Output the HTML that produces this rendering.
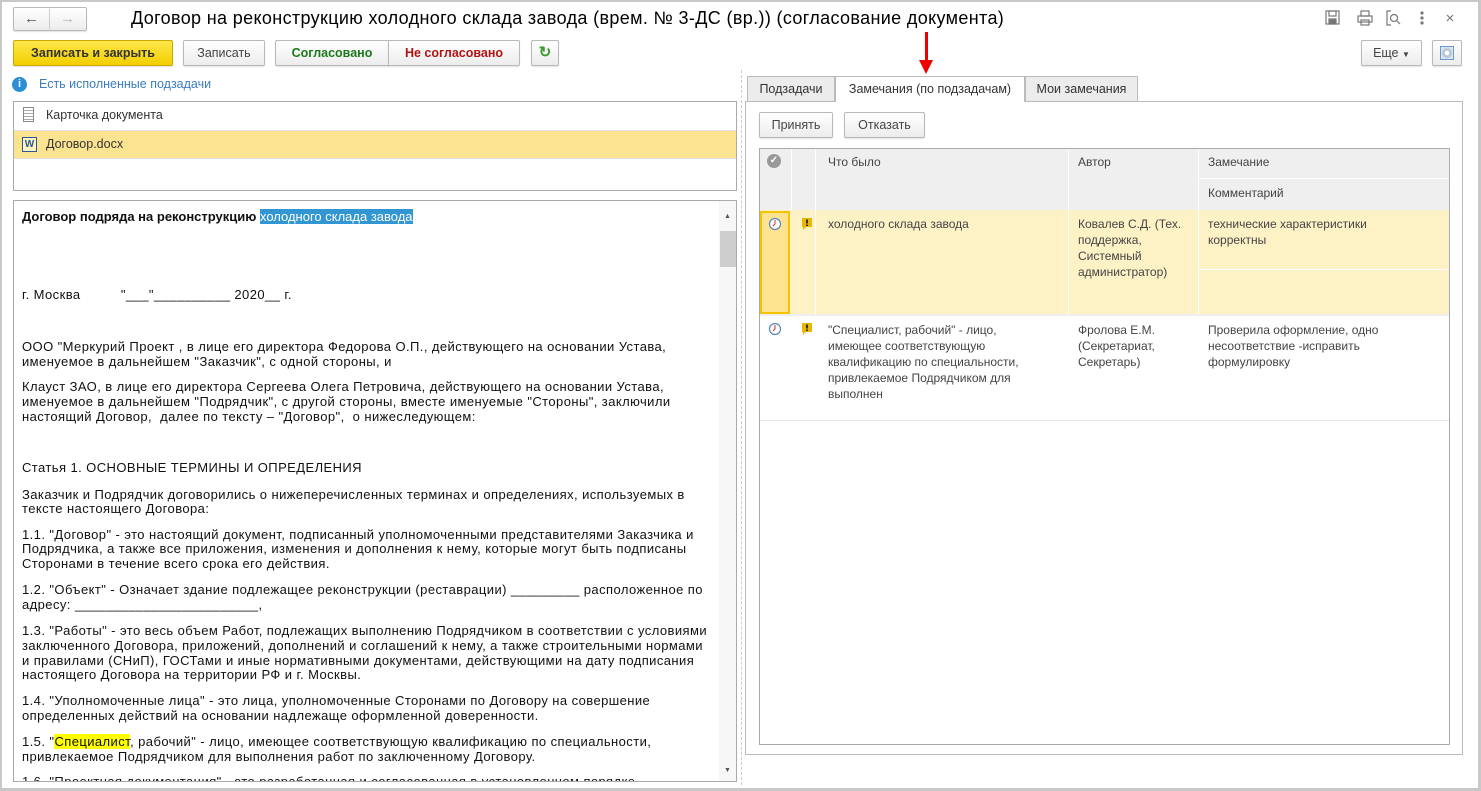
<!DOCTYPE html>
<html><head><meta charset="utf-8"><style>
*{box-sizing:border-box;margin:0;padding:0}
body{width:1481px;height:791px;background:#c8c8c8;position:relative;overflow:hidden;font-family:"Liberation Sans",Arial,sans-serif;font-size:12px;color:#333}
.a{position:absolute}
.win{left:2px;top:2px;width:1476px;height:786px;background:#fff}
.btn{position:absolute;height:26px;border:1px solid #b9b9b9;border-radius:2px;background:linear-gradient(#fff,#ececec);box-shadow:0 1px 1px rgba(0,0,0,.12);text-align:center;line-height:24px;font-size:12.5px;color:#444}
.doc{font-size:13px;color:#111;white-space:nowrap;line-height:15px;letter-spacing:0.42px}
.doc div{position:absolute;left:22px}
.g{position:absolute;font-size:12px;color:#444;line-height:16px}
</style></head><body>
<div class="a win"></div>
<!-- nav -->
<div class="btn" style="left:13px;top:7px;width:74px;height:24px"></div>
<div class="a" style="left:49px;top:9px;width:1px;height:20px;background:#ccc"></div>
<div class="a" style="left:24px;top:10px;font-size:15px;color:#555;font-weight:bold">&#8592;</div>
<div class="a" style="left:60px;top:10px;font-size:15px;color:#bbb;font-weight:bold">&#8594;</div>
<div class="a" style="left:131px;top:8px;font-size:18px;letter-spacing:0.35px;color:#000;white-space:nowrap">Договор на реконструкцию холодного склада завода (врем. № 3-ДС (вр.)) (согласование документа)</div>
<!-- top right icons -->
<svg class="a" style="left:1325px;top:10px" width="140" height="16" viewBox="0 0 140 16" fill="none" stroke="#777" stroke-width="1.2">
<rect x="1" y="1" width="13" height="13"/><rect x="4" y="1" width="7" height="5"/><rect x="4" y="9" width="7" height="5" fill="#777"/>
<rect x="33" y="6" width="14" height="6"/><rect x="36" y="1" width="8" height="5"/><rect x="36" y="10" width="8" height="5"/>
<path d="M66 1h-4v14h4M62 1"/><circle cx="69" cy="8" r="3.5"/><path d="M72 11l3 3"/>
<circle cx="97" cy="3" r="1" fill="#777"/><circle cx="97" cy="8" r="1" fill="#777"/><circle cx="97" cy="13" r="1" fill="#777"/>
<path d="M122 5l6 6M128 5l-6 6"/></svg>
<!-- toolbar -->
<div class="btn" style="left:13px;top:40px;width:160px;background:linear-gradient(#fde74a,#f3cf00);border-color:#c9a800;color:#333;font-weight:bold">Записать и закрыть</div>
<div class="btn" style="left:183px;top:40px;width:82px">Записать</div>
<div class="btn" style="left:275px;top:40px;width:114px;color:#1a7a1a;font-weight:bold;border-radius:2px 0 0 2px">Согласовано</div>
<div class="btn" style="left:388px;top:40px;width:132px;color:#b01515;font-weight:bold;border-radius:0 2px 2px 0">Не согласовано</div>
<div class="btn" style="left:531px;top:40px;width:28px;color:#3a9a2a;font-weight:bold;font-size:15px">&#8635;</div>
<div class="btn" style="left:1361px;top:40px;width:61px">Еще <span style="font-size:8px">&#9660;</span></div>
<div class="btn" style="left:1432px;top:40px;width:30px"><div class="a" style="left:7px;top:5px;width:14px;height:14px;border:1px solid #6a9ac8;background:radial-gradient(#fff 2px,#a9b9cc 3px,#dde6f0 6px)"></div></div>
<!-- info -->
<div class="a" style="left:12px;top:77px;width:15px;height:15px;border-radius:50%;background:#2b8fd6;color:#fff;font-size:11px;font-weight:bold;text-align:center;line-height:15px">i</div>
<div class="a" style="left:39px;top:77px;color:#3b7dbf;font-size:12.5px">Есть исполненные подзадачи</div>
<!-- file list -->
<div class="a" style="left:13px;top:101px;width:724px;height:90px;border:1px solid #aaa;background:#fff"></div>
<div class="a" style="left:14px;top:130px;width:722px;height:1px;background:#e0e0e0"></div>
<div class="a" style="left:14px;top:131px;width:722px;height:27px;background:#fbe391"></div>
<div class="a" style="left:14px;top:158px;width:722px;height:1px;background:#e0e0e0"></div>
<div class="a" style="left:23px;top:107px;width:11px;height:15px;border:1px solid #888;background:repeating-linear-gradient(#fff 0 2px,#aaa 2px 3px)"></div>
<div class="a" style="left:46px;top:108px;font-size:12.5px;color:#333">Карточка документа</div>
<div class="a" style="left:22px;top:137px;width:15px;height:15px;border:1px solid #2b5797;background:#fff3c0;color:#2b5797;font-size:10px;font-weight:bold;text-align:center;line-height:13px">W</div>
<div class="a" style="left:46px;top:137px;font-size:12.5px;color:#333">Договор.docx</div>
<!-- splitter -->
<div class="a" style="left:741px;top:70px;width:0;height:715px;border-left:1px dashed #ccc"></div>
<!-- document -->
<div class="a" style="left:13px;top:200px;width:724px;height:582px;border:1px solid #aaa;background:#fff;overflow:hidden">
<div class="a" style="left:705px;top:0;width:17px;height:580px;background:#f7f7f7"></div>
<div class="a" style="left:706px;top:30px;width:16px;height:36px;background:#cdcdcd"></div>
<div class="a" style="left:710px;top:12px;font-size:7px;color:#555">&#9650;</div>
<div class="a" style="left:710px;top:566px;font-size:7px;color:#555">&#9660;</div>
</div>
<div class="a doc" style="left:0;top:0">
<div style="top:209px;font-weight:bold;letter-spacing:0">Договор подряда на реконструкцию <span style="background:#3296d2;color:#fff;font-weight:normal">холодного склада завода</span></div>
<div style="top:287px">г. Москва&nbsp;&nbsp;&nbsp;&nbsp;&nbsp;&nbsp;&nbsp;&nbsp;&nbsp; "___"__________ 2020__ г.</div>
<div style="top:339px">ООО "Меркурий Проект , в лице его директора Федорова О.П., действующего на основании Устава,</div>
<div style="top:354px">именуемое в дальнейшем "Заказчик", с одной стороны, и</div>
<div style="top:379px">Клауст ЗАО, в лице его директора Сергеева Олега Петровича, действующего на основании Устава,</div>
<div style="top:394px">именуемое в дальнейшем "Подрядчик", с другой стороны, вместе именуемые "Стороны", заключили</div>
<div style="top:409px">настоящий Договор,&nbsp; далее по тексту – "Договор",&nbsp; о нижеследующем:</div>
<div style="top:460px">Статья 1. ОСНОВНЫЕ ТЕРМИНЫ И ОПРЕДЕЛЕНИЯ</div>
<div style="top:487px">Заказчик и Подрядчик договорились о нижеперечисленных терминах и определениях, используемых в</div>
<div style="top:501px">тексте настоящего Договора:</div>
<div style="top:527px">1.1. "Договор" - это настоящий документ, подписанный уполномоченными представителями Заказчика и</div>
<div style="top:541px">Подрядчика, а также все приложения, изменения и дополнения к нему, которые могут быть подписаны</div>
<div style="top:556px">Сторонами в течение всего срока его действия.</div>
<div style="top:582px">1.2. "Объект" - Означает здание подлежащее реконструкции (реставрации) _________ расположенное по</div>
<div style="top:597px">адресу: ________________________,</div>
<div style="top:623px">1.3. "Работы" - это весь объем Работ, подлежащих выполнению Подрядчиком в соответствии с условиями</div>
<div style="top:638px">заключенного Договора, приложений, дополнений и соглашений к нему, а также строительными нормами</div>
<div style="top:653px">и правилами (СНиП), ГОСТами и иные нормативными документами, действующими на дату подписания</div>
<div style="top:667px">настоящего Договора на территории РФ и г. Москвы.</div>
<div style="top:693px">1.4. "Уполномоченные лица" - это лица, уполномоченные Сторонами по Договору на совершение</div>
<div style="top:708px">определенных действий на основании надлежаще оформленной доверенности.</div>
<div style="top:734px">1.5. "<span style="background:#ffff00">Специалист</span>, рабочий" - лицо, имеющее соответствующую квалификацию по специальности,</div>
<div style="top:749px">привлекаемое Подрядчиком для выполнения работ по заключенному Договору.</div>
<div style="top:774px;height:7px;overflow:hidden">1.6. "Проектная документация" - это разработанная и согласованная в установленном порядке</div>
</div>
<!-- arrow -->
<div class="a" style="left:925px;top:32px;width:3px;height:30px;background:#e00"></div>
<div class="a" style="left:919px;top:60px;width:0;height:0;border-left:7px solid transparent;border-right:7px solid transparent;border-top:14px solid #e00"></div>
<!-- tabs -->
<div class="a" style="left:745px;top:101px;width:718px;height:654px;border:1px solid #bbb;background:#fff"></div>
<div class="a" style="left:747px;top:76px;width:88px;height:26px;border:1px solid #bbb;background:#ececec;line-height:25px;text-align:center;font-size:12.5px">Подзадачи</div>
<div class="a" style="left:835px;top:76px;width:190px;height:26px;border:1px solid #bbb;border-bottom:none;background:#fff;line-height:25px;text-align:center;font-size:12.5px">Замечания (по подзадачам)</div>
<div class="a" style="left:1025px;top:76px;width:113px;height:26px;border:1px solid #bbb;background:#ececec;line-height:25px;text-align:center;font-size:12.5px">Мои замечания</div>
<div class="btn" style="left:759px;top:112px;width:74px">Принять</div>
<div class="btn" style="left:844px;top:112px;width:81px">Отказать</div>
<!-- grid -->
<div class="a" style="left:759px;top:148px;width:691px;height:597px;border:1px solid #aaa;background:#fff"></div>
<div class="a" style="left:760px;top:149px;width:689px;height:61px;background:#efefef"></div>
<div class="a" style="left:1199px;top:178px;width:250px;height:1px;background:#fff"></div>
<div class="a" style="left:791px;top:149px;width:1px;height:61px;background:#fff"></div>
<div class="a" style="left:815px;top:149px;width:1px;height:61px;background:#fff"></div>
<div class="a" style="left:1068px;top:149px;width:1px;height:61px;background:#fff"></div>
<div class="a" style="left:1198px;top:149px;width:1px;height:61px;background:#fff"></div>
<div class="a" style="left:767px;top:154px;width:14px;height:14px;border-radius:50%;background:#999;color:#fff;font-size:10px;text-align:center;line-height:14px;font-weight:bold">&#10003;</div>
<div class="g" style="left:828px;top:154px">Что было</div>
<div class="g" style="left:1078px;top:154px">Автор</div>
<div class="g" style="left:1208px;top:154px">Замечание</div>
<div class="g" style="left:1208px;top:185px">Комментарий</div>
<!-- row1 -->
<div class="a" style="left:760px;top:210px;width:689px;height:104px;background:#fdf1c6"></div>
<div class="a" style="left:760px;top:211px;width:30px;height:103px;background:#fde290;border:2px solid #f5c400"></div>
<div class="a" style="left:815px;top:210px;width:1px;height:104px;background:#fff"></div>
<div class="a" style="left:1068px;top:210px;width:1px;height:104px;background:#fff"></div>
<div class="a" style="left:1198px;top:210px;width:1px;height:104px;background:#fff"></div>
<div class="a" style="left:1199px;top:269px;width:250px;height:1px;background:#fff"></div>
<div class="a" style="left:760px;top:314px;width:689px;height:2px;background:#eee"></div>
<div class="g" style="left:828px;top:216px">холодного склада завода</div>
<div class="g" style="left:1078px;top:216px">Ковалев С.Д. (Тех.<br>поддержка,<br>Системный<br>администратор)</div>
<div class="g" style="left:1208px;top:216px">технические характеристики<br>корректны</div>
<!-- row2 -->
<div class="g" style="left:828px;top:322px">"Специалист, рабочий" - лицо,<br>имеющее соответствующую<br>квалификацию по специальности,<br>привлекаемое Подрядчиком для<br>выполнен</div>
<div class="g" style="left:1078px;top:322px">Фролова Е.М.<br>(Секретариат,<br>Секретарь)</div>
<div class="g" style="left:1208px;top:322px">Проверила оформление, одно<br>несоответствие -исправить<br>формулировку</div>
<div class="a" style="left:760px;top:420px;width:689px;height:1px;background:#e4e4e4"></div>
<!-- icons rows -->
<svg class="a" style="left:768px;top:217px" width="14" height="14"><circle cx="7" cy="7" r="5.5" fill="#fff" stroke="#5a86b8" stroke-width="1.2"/><path d="M7 3v4l-2 2" stroke="#c33" fill="none"/></svg>
<svg class="a" style="left:768px;top:322px" width="14" height="14"><circle cx="7" cy="7" r="5.5" fill="#fff" stroke="#5a86b8" stroke-width="1.2"/><path d="M7 3v4l-2 2" stroke="#c33" fill="none"/></svg>
<svg class="a" style="left:801px;top:217px" width="12" height="14"><path d="M1 1h10v9h-6l-3 3v-3h-1z" fill="#e6b800"/><rect x="5" y="2.5" width="2" height="4" fill="#333"/><rect x="5" y="7.5" width="2" height="1.5" fill="#333"/></svg>
<svg class="a" style="left:801px;top:322px" width="12" height="14"><path d="M1 1h10v9h-6l-3 3v-3h-1z" fill="#e6b800"/><rect x="5" y="2.5" width="2" height="4" fill="#333"/><rect x="5" y="7.5" width="2" height="1.5" fill="#333"/></svg>
</body></html>
